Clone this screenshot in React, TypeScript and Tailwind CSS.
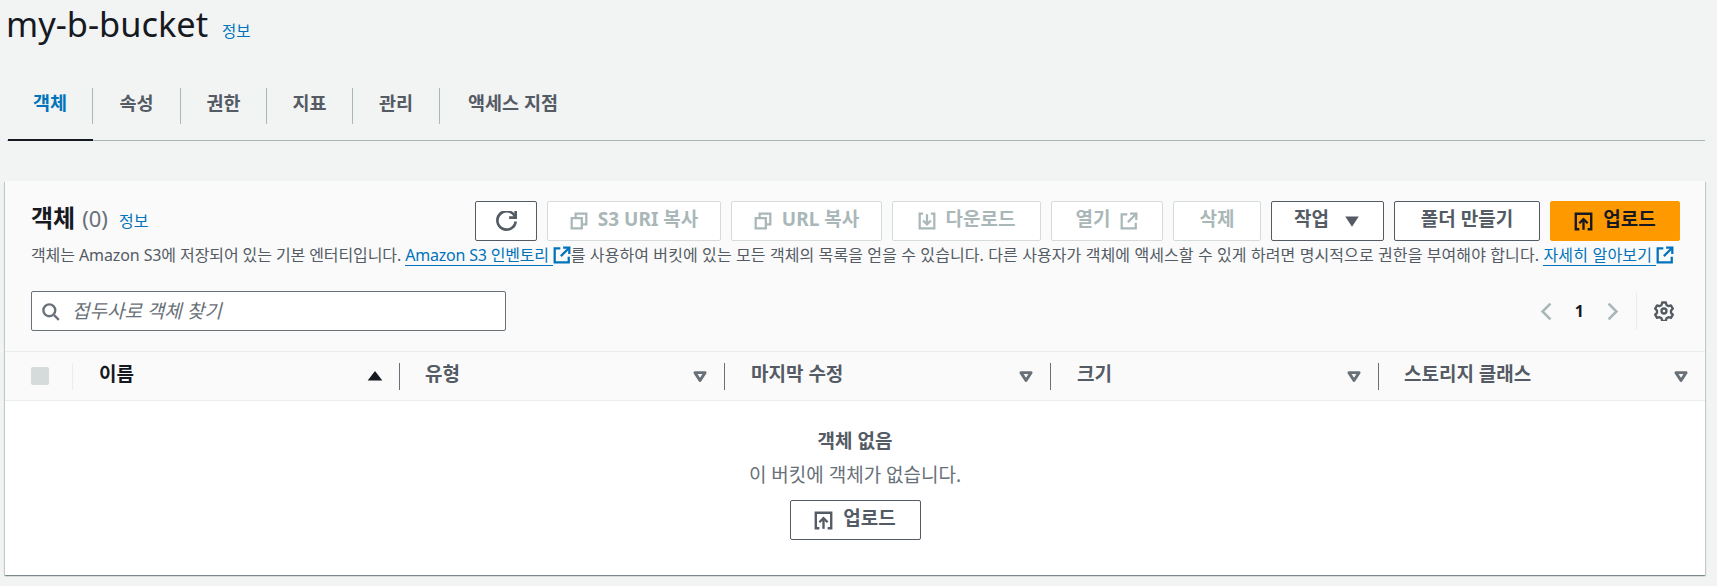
import React from "react";

const Ext = ({ c = "text-[#0073bb]" }: { c?: string }) => (
  <svg viewBox="0 0 16 16" className={`w-[18px] h-[18px] inline-block shrink-0 ${c}`} fill="none" stroke="currentColor" strokeWidth="2">
    <path d="M9 1.5h5.500V7" /><path d="M14.500 1.500 7 9" /><path d="M6.500 2H1.500v12.500h12.500V9.500" />
  </svg>
);
const Copy = () => (
  <svg viewBox="0 0 16 16" className="w-[18px] h-[18px] text-[#aab7b8]" fill="none" stroke="currentColor" strokeWidth="2">
    <path d="M1.500 5.500h9v9h-9z" /><path d="M5 5V1.500h9.500V11H11" />
  </svg>
);
const Download = () => (
  <svg viewBox="0 0 16 16" className="w-[18px] h-[18px] text-[#aab7b8]" fill="none" stroke="currentColor" strokeWidth="2">
    <path d="M4.500 1.500h-3v13h13v-13h-3" /><path d="M8 2v9" /><path d="M4.500 7.500 8 11l3.500-3.500" />
  </svg>
);
const Upload = () => (
  <svg viewBox="0 0 16 16" className="w-[19px] h-[19px]" fill="none" stroke="currentColor" strokeWidth="2">
    <path d="M4.500 14.500h-3v-13h13v13h-3" /><path d="M8 15V6" /><path d="M4.500 9.500 8 6l3.500 3.500" />
  </svg>
);
const Refresh = () => (
  <svg viewBox="0 0 16 16" className="w-[21px] h-[21px] text-[#545b64]" fill="none" stroke="currentColor" strokeWidth="2">
    <path d="M10 5h5V0" /><path d="M15 8a7 7 0 1 1-.3-3" />
  </svg>
);
const SortDown = () => (
  <svg viewBox="0 0 16 16" className="w-[18px] h-[18px] text-[#687078] mb-[1px]" fill="none" stroke="currentColor" strokeWidth="2.600" strokeLinejoin="round">
    <path d="M3.500 5h9L8 12z" fill="none" />
  </svg>
);
const SortUp = () => (
  <svg viewBox="0 0 16 16" className="w-[18px] h-[18px] text-[#16191f] mb-[1px]" fill="currentColor">
    <path d="M8 3.500 14.500 12h-13z" />
  </svg>
);

const Label = ({ children }: { children: React.ReactNode }) => <span className="mb-[4px]">{children}</span>;

const btn = "h-[40px] rounded-[2px] border text-[19px] font-bold flex items-center justify-center gap-[10px] shrink-0";
const disabled = `${btn} border-[#d5dbdb] text-[#aab7b8] bg-white`;
const normal = `${btn} border-[#545b64] text-[#545b64] bg-white`;

const cols = [
  { w: "w-[327px]", label: "이름", up: true, pl: "pl-[26px]", text: "text-[#16191f]" },
  { w: "w-[325px]", label: "유형", pl: "pl-[25px]", text: "text-[#545b64]" },
  { w: "w-[326px]", label: "마지막 수정", pl: "pl-[26px]", text: "text-[#545b64]" },
  { w: "w-[328px]", label: "크기", pl: "pl-[26px]", text: "text-[#545b64]" },
  { w: "w-[326px]", label: "스토리지 클래스", pl: "pl-[25px]", text: "text-[#545b64]" },
];

export default function App() {
  return (
    <div className="w-[1717px] h-[586px] overflow-hidden bg-[#f2f3f3] text-[#16191f] font-['Noto_Sans','Noto_Sans_CJK_KR',sans-serif]">
      <div className="flex items-baseline h-[50px] pl-[6px]">
        <h1 className="text-[34.4px] leading-[47px] font-normal">my-b-bucket</h1>
        <span className="ml-[14px] text-[15.5px] text-[#0073bb]">정보</span>
      </div>

      <div className="ml-[7px] mr-[12px] mt-[36px] h-[55px] border-b border-[#aab7b8] flex text-[18.5px] font-bold text-[#545b64]">
        {[
          ["객체", "w-[85px] ml-[1px]"],
          ["속성", "w-[88px]"],
          ["권한", "w-[86px]"],
          ["지표", "w-[86px]"],
          ["관리", "w-[87px]"],
          ["액세스 지점", "w-[146px]"],
        ].map(([t, w], i) => (
          <div key={t} className={`${w} h-[55px] flex justify-center pt-[2px] ${i === 0 ? "border-b-2 border-[#16191f] text-[#0073bb]" : ""}`}>
            <div className={`w-full h-[36px] flex items-center justify-center pb-[6px] ${i < 5 ? "border-r border-[#aab7b8]" : ""}`}>{t}</div>
          </div>
        ))}
      </div>

      <div className="ml-[5px] mt-[40px] w-[1700px] h-[394px] bg-white shadow-[0_1px_1px_0_rgba(0,28,36,0.3),1px_1px_1px_0_rgba(0,28,36,0.15),-1px_1px_1px_0_rgba(0,28,36,0.15)] flex flex-col">
        <div className="bg-[#fafafa] border-b border-[#eaeded] h-[171px] px-[26px] pt-[20px] shrink-0">
          <div className="flex items-start justify-between h-[40px]">
            <div className="flex items-baseline">
              <span className="text-[24px] leading-[34px] font-bold">객체</span>
              <span className="ml-[7px] text-[22px] leading-[34px] text-[#687078]">(0)</span>
              <span className="ml-[11px] text-[16px] text-[#0073bb]">정보</span>
            </div>
            <div className="flex gap-[10px] mr-[-1px]">
              <button className={`${normal} w-[62px]`}><Refresh /></button>
              <button className={`${disabled} w-[174px]`}><Copy /><Label>S3 URI 복사</Label></button>
              <button className={`${disabled} w-[151px]`}><Copy /><Label>URL 복사</Label></button>
              <button className={`${disabled} w-[149px]`}><Download /><Label>다운로드</Label></button>
              <button className={`${disabled} w-[112px]`}><Label>열기</Label><Ext c="text-[#aab7b8]" /></button>
              <button className={`${disabled} w-[88px]`}><Label>삭제</Label></button>
              <button className={`${normal} w-[113px]`}><Label>작업</Label><svg viewBox="0 0 16 16" className="w-[18px] h-[18px] ml-[4px]" fill="currentColor"><path d="M2 4h12l-6 9z" /></svg></button>
              <button className={`${normal} w-[146px]`}><Label>폴더 만들기</Label></button>
              <button className={`${btn} w-[130px] bg-[#ff9900] border-[#ff9900] text-[#16191f]`}><Upload /><Label>업로드</Label></button>
            </div>
          </div>
          <p className="mt-[3px] text-[16px] leading-[22px] text-[#545b64] whitespace-nowrap flex items-center">
            <span className="tracking-[-0.1px] whitespace-pre">객체는 Amazon S3에 저장되어 있는 기본 엔터티입니다. </span>
            <span className="text-[#0073bb] border-b border-[#0073bb] leading-[20px] pr-[4px] tracking-[-0.2px]">Amazon S3 인벤토리</span>
            <Ext />
            <span className="tracking-[0.1px] whitespace-pre">를 사용하여 버킷에 있는 모든 객체의 목록을 얻을 수 있습니다. 다른 사용자가 객체에 액세스할 수 있게 하려면 명시적으로 권한을 부여해야 합니다. </span>
            <span className="text-[#0073bb] border-b border-[#0073bb] leading-[20px] pr-[4px] tracking-[0.2px]">자세히 알아보기</span>
            <Ext />
          </p>
          <div className="mt-[25px] flex items-center justify-between">
            <div className="w-[475px] h-[40px] border border-[#687078] rounded-[2px] bg-white flex items-center pl-[9px] gap-[12px]">
              <svg viewBox="0 0 16 16" className="w-[19px] h-[19px] text-[#687078]" fill="none" stroke="currentColor" strokeWidth="2">
                <circle cx="7" cy="7" r="5" /><path d="m11 11 4 4" />
              </svg>
              <span className="text-[19px] italic text-[#687078]">접두사로 객체 찾기</span>
            </div>
            <div className="flex items-center mr-[5px]">
              <svg viewBox="0 0 16 16" className="w-[21px] h-[21px] text-[#aab7b8]" fill="none" stroke="currentColor" strokeWidth="2"><path d="M11 2 5 8l6 6" /></svg>
              <span className="mx-[18px] text-[16px] font-bold">1</span>
              <svg viewBox="0 0 16 16" className="w-[21px] h-[21px] text-[#aab7b8]" fill="none" stroke="currentColor" strokeWidth="2"><path d="m5 2 6 6-6 6" /></svg>
              <div className="ml-[13px] h-[38px] border-l border-[#eaeded] pl-[17px] flex items-center">
                <svg viewBox="0 0 24 24" className="w-[20px] h-[20px] text-[#545b64]" fill="none" stroke="currentColor" strokeWidth="2.800" strokeLinejoin="round">
                  <path d="M9.800 1.800h4.400l.8 3 2.400 1.400 3-.8 2.200 3.800-2.200 2.200v2.800l2.200 2.200-2.200 3.800-3-.8-2.400 1.400-.8 3H9.800l-.8-3-2.400-1.400-3 .8-2.200-3.800 2.200-2.200v-2.800L1.400 9.200l2.200-3.800 3 .8L9 4.800z" />
                  <circle cx="12" cy="12" r="3" />
                </svg>
              </div>
            </div>
          </div>
        </div>

        <div className="h-[49px] shrink-0 bg-[#fafafa] border-b border-[#eaeded] flex items-center text-[19px] font-bold">
          <div className="w-[68px] h-[27px] flex items-center pl-[26px] border-r border-[#eaeded]">
            <div className="w-[18px] h-[18px] rounded-[2px] bg-[#d5dbdb]" />
          </div>
          {cols.map((c, i) => (
            <div key={c.label} className={`${c.w} h-[27px] flex items-center justify-between pr-[15px] ${c.pl} ${i < 4 ? "border-r border-[#687078]" : ""}`}>
              <span className={`${c.text} mb-[4px]`}>{c.label}</span>
              {c.up ? <SortUp /> : <SortDown />}
            </div>
          ))}
        </div>

        <div className="flex-1 flex flex-col items-center pt-[29px]">
          <div className="text-[19px] leading-[22px] font-bold text-[#545b64]">객체 없음</div>
          <div className="mt-[12px] text-[19px] leading-[22px] text-[#687078]">이 버킷에 객체가 없습니다.</div>
          <button className={`${normal} w-[131px] mt-[14px]`}><Upload /><Label>업로드</Label></button>
        </div>
      </div>
    </div>
  );
}
